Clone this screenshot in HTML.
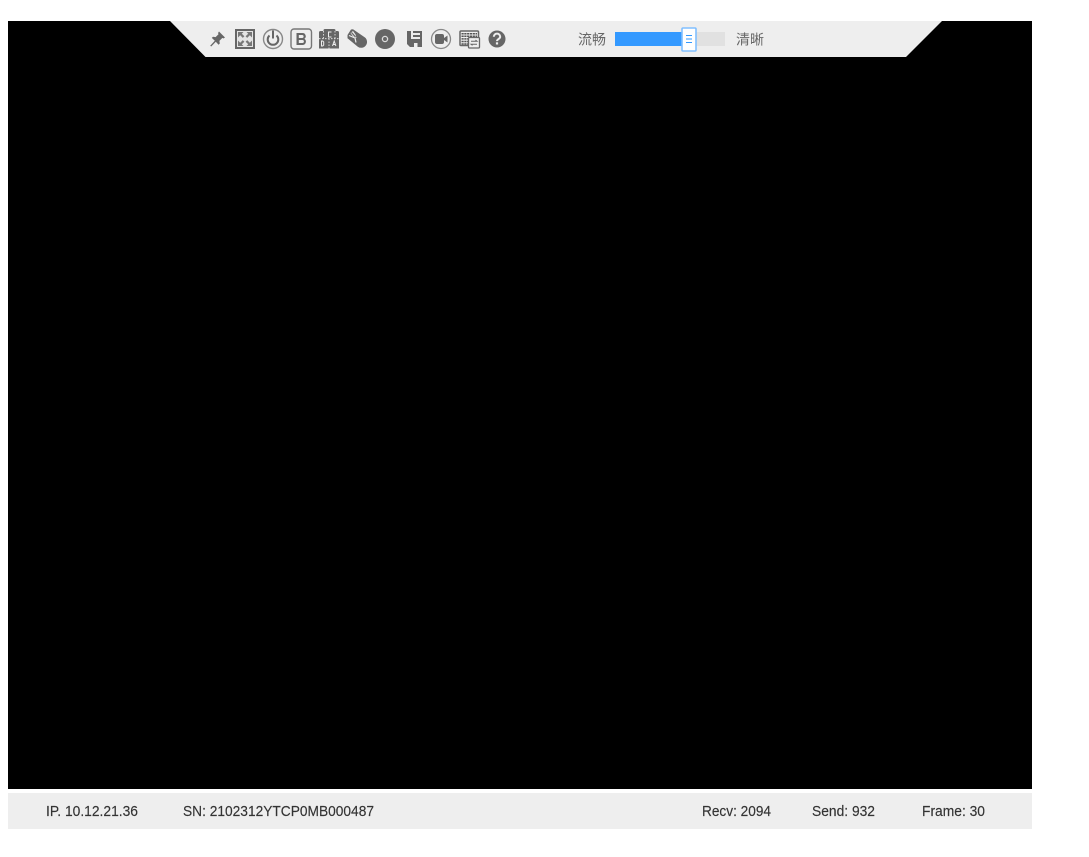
<!DOCTYPE html>
<html lang="zh">
<head>
<meta charset="utf-8">
<title>Remote Console</title>
<style>
html,body{margin:0;padding:0;width:1089px;height:857px;background:#fff;overflow:hidden}
svg{position:absolute;left:0;top:0;display:block}
.f{font-family:"Liberation Sans","Noto Sans CJK SC",sans-serif;font-size:15px;fill:#333;stroke:#333;stroke-width:.15}
.c{font-family:"Liberation Sans","Noto Sans CJK SC",sans-serif;font-size:14px;fill:#666}
</style>
</head>
<body>
<svg width="1089" height="857" viewBox="0 0 1089 857">
  <rect x="8" y="21" width="1024" height="768" fill="#000"/>
  <polygon points="170,21 942,21 906,57 205.500,57" fill="#eee"/>
  <rect x="8" y="793" width="1024" height="36" fill="#eee"/>

  <!-- pin -->
  <path d="M219 31.500l6 6-1.600 1-1-.6-3 3 .4 2.600-1.200 1.200-2.800-3-4.600 4.800-1-.8 4.600-5-3-2.800 1.200-1.200 2.600.4 3-3-.6-1z" fill="#666"/>
  <!-- fullscreen -->
  <rect x="236" y="30" width="18" height="18" fill="#e4e4e4" stroke="#666" stroke-width="2"/>
  <path d="M238 32h5.500l-1.700 1.700 2.600 2.600-1.600 1.600-2.600-2.600-2.200 2.200zM252 32h-5.500l1.700 1.700-2.600 2.600 1.600 1.600 2.600-2.600 2.200 2.200zM238 46h5.500l-1.700-1.700 2.600-2.600-1.600-1.600-2.600 2.600-2.200-2.200zM252 46h-5.500l1.700-1.700-2.600-2.600 1.600-1.600 2.600 2.600 2.200-2.200z" fill="#777"/>
  <!-- power -->
  <circle cx="273" cy="39" r="9.500" fill="none" stroke="#888" stroke-width="1.400"/>
  <path d="M269.500 35.500a5.300 5.300 0 1 0 7 0" fill="none" stroke="#666" stroke-width="2"/>
  <path d="M273 30.500v8" stroke="#666" stroke-width="2"/>
  <!-- B -->
  <rect x="291" y="29" width="20.500" height="20" rx="3" fill="none" stroke="#777" stroke-width="1.400"/>
  <path d="M296.500 33h6a3.200 3.200 0 0 1 1.900 5.800a3.400 3.400 0 0 1-1.600 6.200h-6.300zM298.800 35v3h3.300a1.500 1.500 0 0 0 0-3zM298.800 40v3h3.600a1.500 1.500 0 0 0 0-3z" fill="#666" fill-rule="evenodd"/>
  <!-- keys -->
  <path d="M323.500 31v-.5a1.500 1.500 0 0 1 1.500-1.500h9a1.500 1.500 0 0 1 1.500 1.500v.5h2a1.500 1.500 0 0 1 1.500 1.500V48.500H319V32.500a1.500 1.500 0 0 1 1.500-1.500z" fill="#666"/>
  <path d="M329 38.500v10M323.500 31v7.500M335 31v7.500M319 38.700h20" stroke="#eee" stroke-width=".8" stroke-dasharray="1.500 1.500"/>
  <path d="M331.500 32h-3v5h3M321.500 41v5h1.200l1-1v-3l-1-1zM332.500 46l1.700-5 1.700 5M333 44.500h2.500" fill="none" stroke="#eee" stroke-width="1"/>
  <!-- mouse -->
  <path d="M347.500 35l3.500-5.500 2-.2 12 8.200a5.800 5.800 0 0 1 .8 8 5.800 5.800 0 0 1-8 1.200l-10.300-8.500z" fill="#666"/>
  <path d="M349 35.500l6 2.500 1 4.500" fill="none" stroke="#eee" stroke-width="1.200"/>
  <path d="M350.500 33l2.500-2 2.500 3.500 1 3.500-3.500-1.500z" fill="#eee"/>
  <path d="M351.500 32.500l4 4.500" stroke="#666" stroke-width="1.300"/>
  <!-- disc -->
  <circle cx="385" cy="39" r="10" fill="#666"/>
  <circle cx="385" cy="39" r="2.600" fill="none" stroke="#ddd" stroke-width="1.300"/>
  <!-- save -->
  <path d="M407 31h4v8h11v8h-4.500v-4h-3.500v4h-4l-3-3z" fill="#666"/>
  <path d="M413 31h9v2h-9zM413 35h9v2h-9z" fill="#666"/>
  <path d="M420 31h2v8h-2z" fill="#666"/>
  <!-- video -->
  <circle cx="441" cy="39" r="9.500" fill="none" stroke="#888" stroke-width="1.300"/>
  <rect x="435" y="34" width="9" height="10" rx="2" fill="#666"/>
  <path d="M444 38l3.500-2.500v7l-3.500-2.500z" fill="#666"/>
  <!-- keyboard -->
  <rect x="460" y="31" width="18.500" height="14.500" rx="1" fill="#eee" stroke="#666" stroke-width="1.500"/>
  <path d="M461.500 33.700h15.500M461.500 36.300h15.500M461.500 38.900h8M461.500 41.500h6.500M461.500 44h6.500" stroke="#555" stroke-width="1.500" stroke-dasharray="2.200 .6"/>
  <rect x="468.500" y="37.500" width="11" height="10.500" rx="1" fill="#eee" stroke="#666" stroke-width="1.300"/>
  <path d="M471 41.200h6l-1.500-1.200M477 44.200h-6l1.500 1.200" fill="none" stroke="#666" stroke-width="1"/>
  <!-- help -->
  <circle cx="497" cy="39" r="8.500" fill="#666"/>
  <path d="M493.800 36.800a3.200 3.200 0 0 1 6.400 0c0 2.300-3.200 2.200-3.200 4.300" fill="none" stroke="#eee" stroke-width="2"/>
  <rect x="495.900" y="42.300" width="2.200" height="2.200" fill="#eee"/>

  <!-- quality slider -->
  <text class="c" x="578" y="44.500" textLength="28" lengthAdjust="spacingAndGlyphs">流畅</text>
  <rect x="615" y="32" width="110" height="14" fill="#e1e1e1"/>
  <rect x="615" y="32" width="68" height="14" fill="#39f"/>
  <rect x="682" y="28" width="14" height="23" rx="1" fill="#fff" stroke="#80bfff" stroke-width="1.600"/>
  <path d="M686 35.500h6M686 39h6M686 42.500h6" stroke="#39f" stroke-width="1"/>
  <text class="c" x="736" y="44.500" textLength="28" lengthAdjust="spacingAndGlyphs">清晰</text>

  <!-- status bar -->
  <text class="f" x="46" y="816" textLength="92" lengthAdjust="spacingAndGlyphs">IP. 10.12.21.36</text>
  <text class="f" x="183" y="816" textLength="191" lengthAdjust="spacingAndGlyphs">SN: 2102312YTCP0MB000487</text>
  <text class="f" x="702" y="816" textLength="69" lengthAdjust="spacingAndGlyphs">Recv: 2094</text>
  <text class="f" x="812" y="816" textLength="63" lengthAdjust="spacingAndGlyphs">Send: 932</text>
  <text class="f" x="922" y="816" textLength="63" lengthAdjust="spacingAndGlyphs">Frame: 30</text>
</svg>
</body>
</html>
